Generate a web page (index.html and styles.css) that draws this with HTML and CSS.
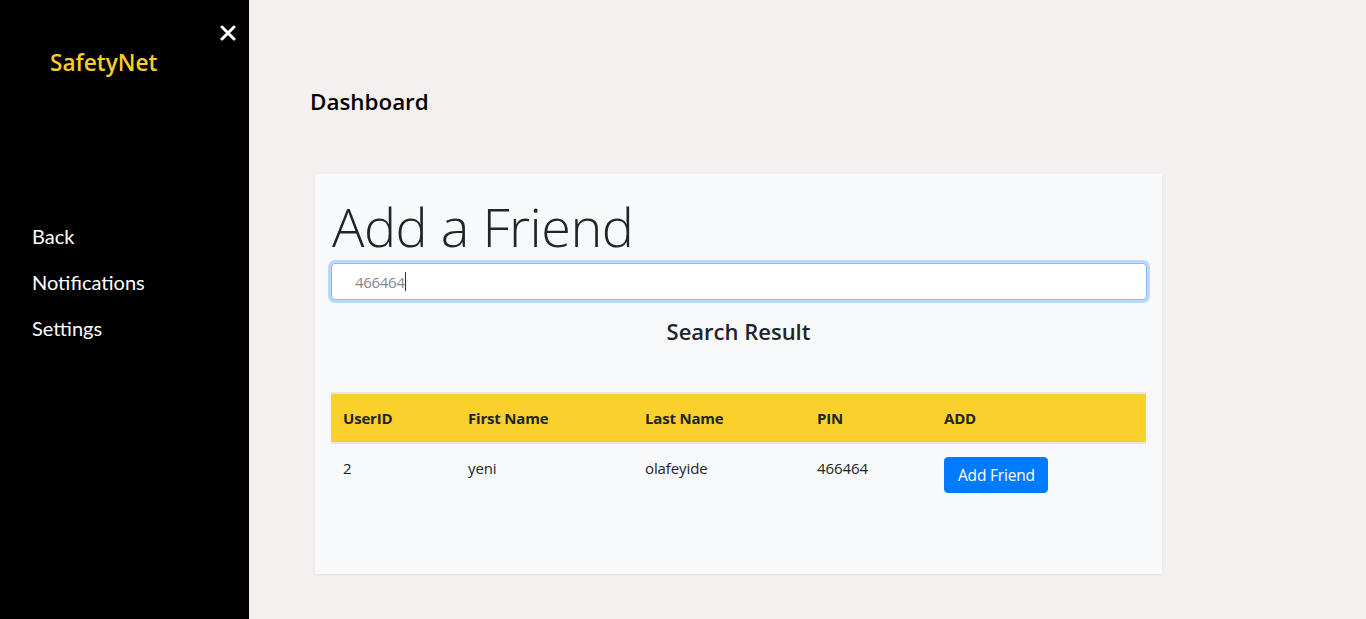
FILE: index.html
```html
<!DOCTYPE html>
<html>
<head>
<meta charset="utf-8">
<link rel="stylesheet" href="styles.css">
</head>
<body>
<div class="app">
  <aside class="sidebar">
    <svg class="close" width="16" height="16" viewBox="0 0 16 16"><path d="M2 2 L14 14 M14 2 L2 14" stroke="#fff" stroke-width="3" stroke-linecap="round"/></svg>
    <div class="brand">SafetyNet</div>
    <nav class="nav">
      <a>Back</a>
      <a>Notifications</a>
      <a>Settings</a>
    </nav>
  </aside>
  <main class="main">
    <h2 class="page-title">Dashboard</h2>
    <section class="card">
      <h1 class="display">Add a Friend</h1>
      <div class="search"><span class="search-text">466464</span><span class="caret"></span></div>
      <h3 class="result-title">Search Result</h3>
      <table class="table">
        <colgroup>
          <col class="c1"><col class="c2"><col class="c3"><col class="c4"><col class="c5">
        </colgroup>
        <thead>
          <tr><th>UserID</th><th>First Name</th><th>Last Name</th><th>PIN</th><th>ADD</th></tr>
        </thead>
        <tbody>
          <tr><td>2</td><td>yeni</td><td>olafeyide</td><td>466464</td><td><button class="btn">Add Friend</button></td></tr>
        </tbody>
      </table>
    </section>
  </main>
</div>
</body>
</html>
```
FILE: styles.css
```css
* { box-sizing: border-box; }
html, body { margin: 0; height: 100%; }
body {
  font-family: "Open Sans", "Noto Sans", sans-serif;
  color: #212529;
  background: #f4f0ef;
}
.app { display: flex; height: 619px; }
.sidebar {
  width: 249px;
  flex: none;
  background: #000;
  position: relative;
}
.close {
  position: absolute;
  left: 220px;
  top: 25px;
}
.brand {
  padding: 48px 0 0 50px;
  color: #f7cd2c;
  font-weight: 600;
  font-size: 22.6px;
  line-height: 30px;
}
.nav {
  display: flex;
  flex-direction: column;
  gap: 16px;
  padding: 143px 0 0 32px;
}
.nav a {
  color: #fff;
  font-family: "Lato", sans-serif;
  font-size: 20px;
  line-height: 30px;
}
.main {
  flex: 1;
  padding: 0 0 0 62px;
}
.page-title {
  margin: 86px 0 0 -1px;
  font-size: 22.4px;
  font-weight: 600;
  line-height: 32px;
  color: #000;
}
.card {
  margin: 56px 0 0 4px;
  width: 847px;
  height: 400px;
  background: #f8f9fa;
  padding: 16px;
  box-shadow: 0 1px 3px rgba(0,0,0,0.08);
}
.display {
  margin: 0 0 1px 0;
  font-size: 54px;
  font-weight: 300;
  line-height: 72px;
  padding-left: 1px;
  letter-spacing: -0.5px;
}
.search {
  height: 37px;
  background: #fff;
  border: 1px solid #80bdff;
  border-radius: 4px;
  box-shadow: 0 0 0 3px rgba(0,123,255,0.25);
  padding: 0 0 0 23px;
  display: flex;
  align-items: center;
  margin: 0 -1px 0 0;
}
.search-text {
  color: #8a8593;
  font-size: 15px;
  letter-spacing: -0.3px;
}
.caret {
  width: 1px;
  height: 19px;
  background: #333;
}
.result-title {
  margin: 15px 0 0 0;
  text-align: center;
  font-size: 22px;
  font-weight: 600;
  line-height: 32px;
}
.table {
  width: 815px;
  margin-top: 45px;
  border-collapse: collapse;
  font-size: 15px;
}
.c1 { width: 125px; }
.c2 { width: 177px; }
.c3 { width: 172px; }
.c4 { width: 127px; }
.c5 { width: 214px; }
.table th {
  background: #fad02c;
  text-align: left;
  font-weight: 700;
  padding: 12px 12px;
  line-height: 24px;
  border-top: 2px solid #e5e7e9;
  border-bottom: 2px solid #e2e4e6;
  letter-spacing: -0.2px;
}
.table td {
  padding: 12px 12px;
  line-height: 24px;
  vertical-align: top;
  letter-spacing: -0.1px;
}
.btn {
  margin-top: 1px;
  background: #007bff;
  color: #fff;
  border: 1px solid #007bff;
  border-radius: 4px;
  font-family: inherit;
  font-size: 15.5px;
  line-height: 24px;
  padding: 5px 12px 5px 13px;
  letter-spacing: -0.2px;
}
```
